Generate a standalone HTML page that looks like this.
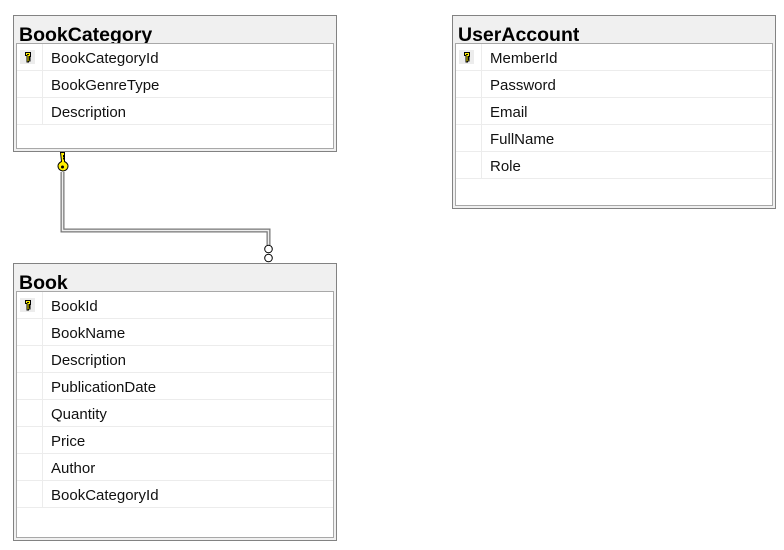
<!DOCTYPE html>
<html><head><meta charset="utf-8"><style>
body{margin:0;width:784px;height:550px;background:#fff;position:relative;overflow:hidden;font-family:"Liberation Sans",sans-serif}
.t{position:absolute;width:324px;border:1px solid #828282;background:#f0f0f0;box-sizing:border-box}
.ttl{position:absolute;left:5px;top:5px;height:23px;overflow:hidden;font-weight:bold;font-size:19.5px;color:#000;line-height:29px}
.in{position:absolute;left:2px;right:2px;top:27px;bottom:2px;border:1px solid #a8a8a8;background:#fff}
.r{height:26px;border-bottom:1px solid #ececec;position:relative}
.r .c{position:absolute;left:0;top:0;width:25px;height:27px;border-right:1px solid #ececec}
.r .x{position:absolute;left:34px;top:6px;font-size:15px;color:#111}
.k{position:absolute;left:3px;top:6px;width:15px;height:14px;background:#ececec}
.k svg{position:absolute;left:4px;top:2px}
</style></head><body>
<svg width="0" height="0" style="position:absolute"><defs>
<g id="key"><path d="M1.5 0.5h5v4h-1.5v1h1v1h-1v1h1v1.5h-1.5v1h-1.5v-6.5h-1.5z" fill="#ffef00" stroke="#000" stroke-width="1"/><rect x="3" y="2" width="2" height="1" fill="#000"/></g>
</defs></svg>

<div class="t" style="left:13px;top:15px;height:137px">
<div class="ttl">BookCategory</div>
<div class="in">
<div class="r"><div class="c"><div class="k"><svg width="8" height="11"><use href="#key"/></svg></div></div><div class="x">BookCategoryId</div></div>
<div class="r"><div class="c"></div><div class="x">BookGenreType</div></div>
<div class="r"><div class="c"></div><div class="x">Description</div></div>
</div></div>

<div class="t" style="left:452px;top:15px;height:194px">
<div class="ttl">UserAccount</div>
<div class="in">
<div class="r"><div class="c"><div class="k"><svg width="8" height="11"><use href="#key"/></svg></div></div><div class="x">MemberId</div></div>
<div class="r"><div class="c"></div><div class="x">Password</div></div>
<div class="r"><div class="c"></div><div class="x">Email</div></div>
<div class="r"><div class="c"></div><div class="x">FullName</div></div>
<div class="r"><div class="c"></div><div class="x">Role</div></div>
</div></div>

<div class="t" style="left:13px;top:263px;height:278px">
<div class="ttl">Book</div>
<div class="in">
<div class="r"><div class="c"><div class="k"><svg width="8" height="11"><use href="#key"/></svg></div></div><div class="x">BookId</div></div>
<div class="r"><div class="c"></div><div class="x">BookName</div></div>
<div class="r"><div class="c"></div><div class="x">Description</div></div>
<div class="r"><div class="c"></div><div class="x">PublicationDate</div></div>
<div class="r"><div class="c"></div><div class="x">Quantity</div></div>
<div class="r"><div class="c"></div><div class="x">Price</div></div>
<div class="r"><div class="c"></div><div class="x">Author</div></div>
<div class="r"><div class="c"></div><div class="x">BookCategoryId</div></div>
</div></div>

<svg style="position:absolute;left:0;top:0" width="784" height="550">
<path d="M62.5 172V230.5H268.5V245" fill="none" stroke="#777" stroke-width="4"/>
<path d="M62.5 172V230.5H268.5V245" fill="none" stroke="#eee" stroke-width="1.5"/>
<path d="M60.5 152.5h4v3h-1v1h1v1.5h-1v1h1v2.5c2 1 3.5 2.5 3.5 4.5c0 3-2.5 5-5 5s-5-2-5-5c0-2 1.5-3.5 3.5-4.5z" fill="#ffef00" stroke="#000" stroke-width="1"/>
<circle cx="62.5" cy="167" r="1.5" fill="#000"/>
<circle cx="268.5" cy="249" r="3.8" fill="#fff" stroke="#000" stroke-width="1"/>
<circle cx="268.5" cy="258" r="3.8" fill="#fff" stroke="#000" stroke-width="1"/>
</svg>
</body></html>
